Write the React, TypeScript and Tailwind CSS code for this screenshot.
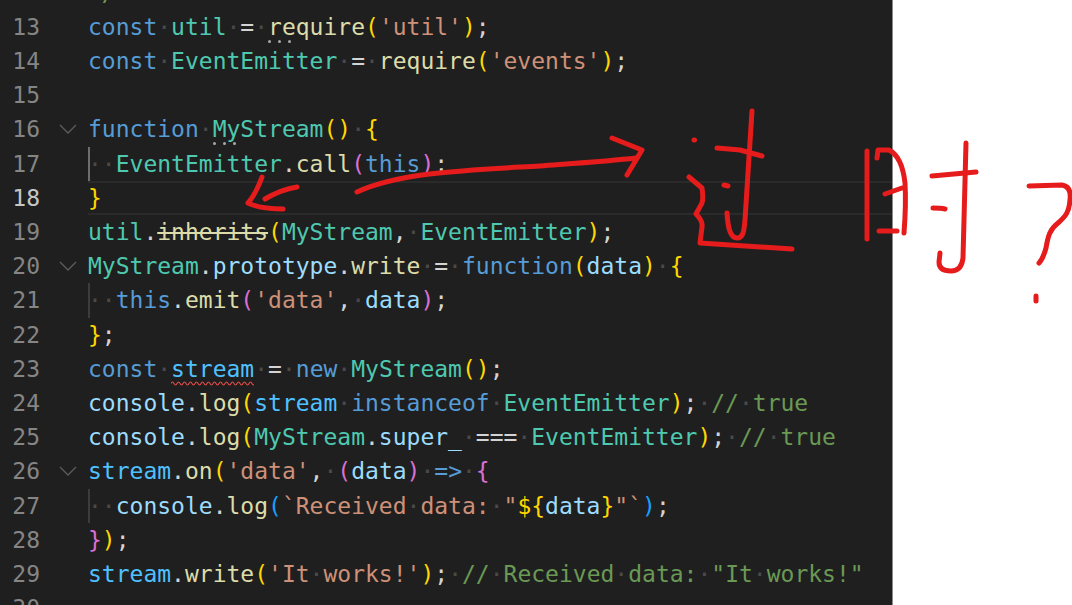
type Deco = 'squiggle' | 'dots' | 'strike';
type Token = [string, string, Deco?];
type Line = { n: number | null; tokens: Token[]; fold?: boolean; guide?: 'on' | 'off'; active?: boolean };

const KW = 'text-[#569cd6]';
const CLS = 'text-[#4ec9b0]';
const CST = 'text-[#4fc1ff]';
const VAR = 'text-[#9cdcfe]';
const FN = 'text-[#dcdcaa]';
const STR = 'text-[#ce9178]';
const COM = 'text-[#6a9955]';
const TXT = 'text-[#d4d4d4]';
const GOLD = 'text-[#ffd700]';
const PINK = 'text-[#da70d6]';
const BLUE = 'text-[#179fff]';

const lines: Line[] = [
  // only the tail of the comment's closing slash shows above the fold
  { n: null, tokens: [['*/', COM]] },
  { n: 13, tokens: [['const', KW], [' ', TXT], ['util', CLS], [' = ', TXT], ['require', FN, 'dots'], ['(', GOLD], ["'util'", STR], [')', GOLD], [';', TXT]] },
  { n: 14, tokens: [['const', KW], [' ', TXT], ['EventEmitter', CLS], [' = ', TXT], ['require', FN], ['(', GOLD], ["'events'", STR], [')', GOLD], [';', TXT]] },
  { n: 15, tokens: [] },
  { n: 16, fold: true, tokens: [['function', KW], [' ', TXT], ['MyStream', CLS, 'dots'], ['()', GOLD], [' ', TXT], ['{', GOLD]] },
  { n: 17, guide: 'on', tokens: [['  ', TXT], ['EventEmitter', CLS], ['.', TXT], ['call', FN], ['(', PINK], ['this', KW], [')', PINK], [';', TXT]] },
  { n: 18, active: true, tokens: [['}', GOLD]] },
  { n: 19, tokens: [['util', CLS], ['.', TXT], ['inherits', FN, 'strike'], ['(', GOLD], ['MyStream', CLS], [',', TXT], [' ', TXT], ['EventEmitter', CLS], [')', GOLD], [';', TXT]] },
  { n: 20, fold: true, tokens: [['MyStream', CLS], ['.', TXT], ['prototype', VAR], ['.', TXT], ['write', FN], [' = ', TXT], ['function', KW], ['(', GOLD], ['data', VAR], [')', GOLD], [' ', TXT], ['{', GOLD]] },
  { n: 21, guide: 'off', tokens: [['  ', TXT], ['this', KW], ['.', TXT], ['emit', FN], ['(', PINK], ["'data'", STR], [',', TXT], [' ', TXT], ['data', VAR], [')', PINK], [';', TXT]] },
  { n: 22, tokens: [['}', GOLD], [';', TXT]] },
  { n: 23, tokens: [['const', KW], [' ', TXT], ['stream', CST, 'squiggle'], [' = ', TXT], ['new', KW], [' ', TXT], ['MyStream', CLS], ['()', GOLD], [';', TXT]] },
  { n: 24, tokens: [['console', VAR], ['.', TXT], ['log', FN], ['(', GOLD], ['stream', CST], [' ', TXT], ['instanceof', KW], [' ', TXT], ['EventEmitter', CLS], [')', GOLD], [';', TXT], [' ', TXT], ['// true', COM]] },
  { n: 25, tokens: [['console', VAR], ['.', TXT], ['log', FN], ['(', GOLD], ['MyStream', CLS], ['.', TXT], ['super_', VAR], [' === ', TXT], ['EventEmitter', CLS], [')', GOLD], [';', TXT], [' ', TXT], ['// true', COM]] },
  { n: 26, fold: true, tokens: [['stream', CST], ['.', TXT], ['on', FN], ['(', GOLD], ["'data'", STR], [',', TXT], [' ', TXT], ['(', PINK], ['data', VAR], [')', PINK], [' ', TXT], ['=>', KW], [' ', TXT], ['{', PINK]] },
  { n: 27, guide: 'off', tokens: [['  ', TXT], ['console', VAR], ['.', TXT], ['log', FN], ['(', BLUE], ['`Received data: "', STR], ['${', GOLD], ['data', VAR], ['}', GOLD], ['"`', STR], [')', BLUE], [';', TXT]] },
  { n: 28, tokens: [['}', PINK], [')', GOLD], [';', TXT]] },
  { n: 29, tokens: [['stream', CST], ['.', TXT], ['write', FN], ['(', GOLD], ["'It works!'", STR], [')', GOLD], [';', TXT], [' ', TXT], ['// Received data: "It works!"', COM]] },
  { n: 30, tokens: [] },
];

// spaces are rendered as dim dots (renderWhitespace: all)
function Chars({ text }: { text: string }): JSX.Element {
  const parts = text.split(/( )/).filter((p) => p !== '');
  return (
    <>
      {parts.map((p, i) =>
        p === ' ' ? (
          <span key={i} className="text-[#4a4a4a]">
            ·
          </span>
        ) : (
          <span key={i}>{p}</span>
        ),
      )}
    </>
  );
}

function Squiggle(): JSX.Element {
  const d = 'M0 2.5' + ' q1.5 -3 3 0 q1.5 3 3 0'.repeat(14);
  return (
    <svg className="absolute left-0 top-[29px] h-[5px] w-[83px]" viewBox="0 0 83 5" fill="none">
      <path d={d} stroke="#f14c4c" strokeWidth="1.1" />
    </svg>
  );
}

function Dots(): JSX.Element {
  return (
    <span className="absolute left-0 top-[30px] flex gap-[7px]">
      <span className="h-[3px] w-[3px] rounded-full bg-[#a8a8a8]" />
      <span className="h-[3px] w-[3px] rounded-full bg-[#a8a8a8]" />
      <span className="h-[3px] w-[3px] rounded-full bg-[#a8a8a8]" />
    </span>
  );
}

function TokenSpan({ token }: { token: Token }): JSX.Element {
  const [text, color, deco] = token;
  if (deco === 'strike') {
    return <span className={`${color} line-through`}>{text}</span>;
  }
  if (deco) {
    return (
      <span className={`${color} relative inline-block`}>
        {text}
        {deco === 'squiggle' ? <Squiggle /> : <Dots />}
      </span>
    );
  }
  return (
    <span className={color}>
      <Chars text={text} />
    </span>
  );
}

function FoldChevron(): JSX.Element {
  return (
    <svg className="ml-[19px] h-[11px] w-[18px]" viewBox="0 0 18 11" fill="none">
      <path d="M1 1l8 8 8-8" stroke="#5c5c5c" strokeWidth="1.3" />
    </svg>
  );
}

function CodeLine({ line }: { line: Line }): JSX.Element {
  const guide =
    line.guide === 'on'
      ? 'shadow-[inset_2px_0_0_#6e6e6e]'
      : line.guide === 'off'
        ? 'shadow-[inset_2px_0_0_#3c3c3c]'
        : '';
  return (
    <div className="flex h-[34.2px] leading-[34.2px]">
      <div className={`w-[40px] shrink-0 text-right ${line.active ? 'text-[#c6c6c6]' : 'text-[#858585]'}`}>
        {line.n}
      </div>
      <div className="flex w-[48px] shrink-0 items-center">{line.fold && <FoldChevron />}</div>
      <div
        className={`min-w-0 flex-1 whitespace-pre ${guide} ${
          line.active ? 'box-border border-y-2 border-[#2a2a2a] leading-[30.2px]' : ''
        }`}
      >
        {line.tokens.map((t, i) => (
          <TokenSpan key={i} token={t} />
        ))}
      </div>
    </div>
  );
}

// red pen annotations drawn on top of the screenshot
function Annotations(): JSX.Element {
  const strokes = [
    'M357 192C400 172 470 170 540 166C580 163 610 161 636 158',
    'M612 138L642 150L627 175',
    'M262 177C258 188 254 196 248 203C258 208 270 209 283 209',
    'M265 199C275 193 285 189 297 187',
    'M694 140L694.5 140',
    'M717 148L740 150L762 156',
    'M752 111C750 140 747 190 745 220C744 232 743 238 737 238C731 238 728 230 727 213',
    'M724 185L728 186',
    'M689 177L702 188C703 195 703 200 702 203L696 214C700 218 703 222 702 227L700 243L792 249',
    'M867 151L867 239',
    'M877 158L878 150L889 150C897 154 903 165 905 183C906 200 905 220 904 233',
    'M885 194L902 188',
    'M879 231L897 231',
    'M932 176L976 172',
    'M966 143L963 258C962 267 958 271 951 271C943 271 939 268 939 262L940 253',
    'M933 208C937 208 941 208 945 209',
    'M1029 186L1062 185C1069 186 1071 192 1070 200C1069 212 1066 216 1058 223C1050 229 1048 236 1046 248C1044 255 1042 260 1039 263',
    'M1036 296L1036 301',
  ];
  return (
    <svg className="absolute inset-0 h-full w-full" viewBox="0 0 1072 605" fill="none">
      {strokes.map((d, i) => (
        <path key={i} d={d} stroke="#e61c1c" strokeWidth="5" strokeLinecap="round" strokeLinejoin="round" />
      ))}
    </svg>
  );
}

export default function App(): JSX.Element {
  return (
    <div className="relative flex h-[605px] w-full overflow-hidden bg-white font-['DejaVu_Sans_Mono',monospace] text-[23px]">
      <div className="h-full w-[893px] shrink-0 border-r border-[#8a8a8a] bg-[#1f1f1f]">
        <div className="mt-[-24.3px]">
          {lines.map((line) => (
            <CodeLine key={line.n ?? 12} line={line} />
          ))}
        </div>
      </div>
      <Annotations />
    </div>
  );
}
